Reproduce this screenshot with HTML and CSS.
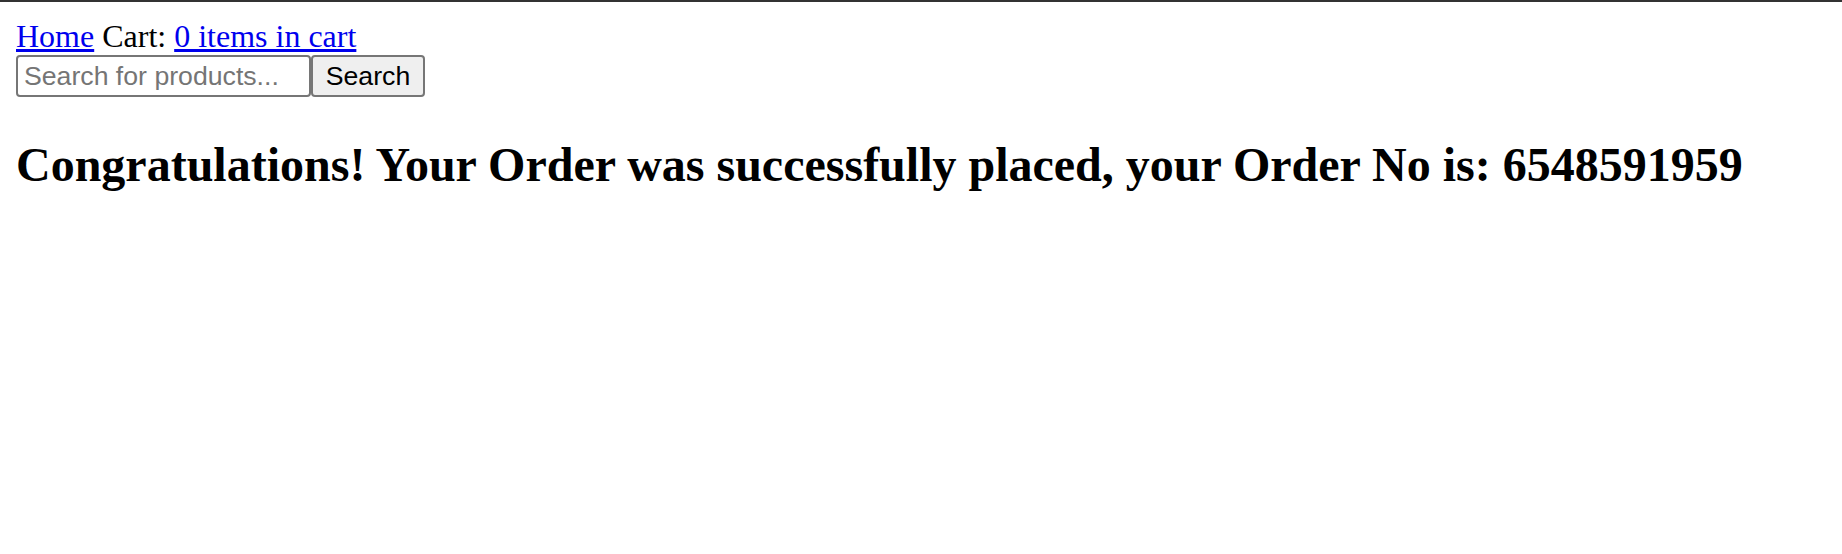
FILE: index.html
```html
<!DOCTYPE html>
<html>
<head>
<meta charset="utf-8">
<title>Order placed</title>
<link rel="stylesheet" href="styles.css">
</head>
<body>
<div class="topbar"></div>
<div class="page">
  <div class="nav"><a href="#">Home</a> Cart: <a href="#">0 items in cart</a></div>
  <form class="search"><input class="search-input" type="text" placeholder="Search for products..."><button class="search-btn" type="button">Search</button></form>
  <h2 class="title">Congratulations! Your Order was successfully placed, your Order No is: 6548591959</h2>
</div>
</body>
</html>
```
FILE: styles.css
```css
html, body {
  margin: 0;
  padding: 0;
  background: #fff;
}
body {
  font-family: "Liberation Serif", "Times New Roman", serif;
  font-size: 32px;
  color: #000;
}
.topbar {
  height: 2px;
  background: #333333;
}
.page {
  padding: 16px;
}
.nav a {
  color: #0000ee;
}
.search {
  margin: 0;
}
.search-input,
.search-btn {
  font-family: "Liberation Sans", Arial, sans-serif;
  font-size: 26.67px;
  border: 2px solid #767676;
  border-radius: 4px;
  margin: 0;
  box-sizing: border-box;
  height: 42px;
  vertical-align: baseline;
}
.search-input {
  width: 295px;
  padding: 2px 6px;
  background: #fff;
  color: #000;
}
.search-input::placeholder {
  color: #757575;
}
.search-btn {
  width: 114px;
  padding: 2px 12px;
  background: #efefef;
  color: #000;
}
.title {
  font-size: 48px;
  font-weight: bold;
  margin: 40px 0;
}
```
